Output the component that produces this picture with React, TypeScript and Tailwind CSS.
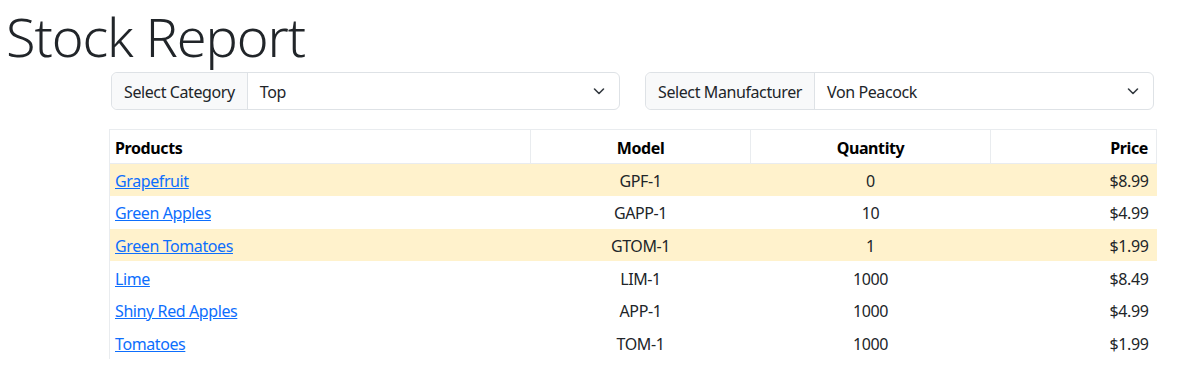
import React from 'react'

const rows = [
    { name: 'Grapefruit', model: 'GPF-1', qty: 0, price: '$8.99' },
    { name: 'Green Apples', model: 'GAPP-1', qty: 10, price: '$4.99' },
    { name: 'Green Tomatoes', model: 'GTOM-1', qty: 1, price: '$1.99' },
    { name: 'Lime', model: 'LIM-1', qty: 1000, price: '$8.49' },
    { name: 'Shiny Red Apples', model: 'APP-1', qty: 1000, price: '$4.99' },
    { name: 'Tomatoes', model: 'TOM-1', qty: 1000, price: '$1.99' },
]

const Chevron = () => (
    <svg width="16" height="16" viewBox="0 0 16 16" fill="none" stroke="#343a40" strokeWidth="1.6" strokeLinecap="round" strokeLinejoin="round">
        <path d="M3.5 6l4.5 4.5 4.5-4.5" />
    </svg>
)

const SelectGroup = ({ label, value }: { label: string; value: string }) => (
    <div className="flex h-[38px] w-[509px] rounded-md border border-[#dee2e6] text-[16px] text-[#212529]">
        <div className="flex items-center px-3 pt-[2px] bg-[#f8f9fa] border-r border-[#dee2e6] rounded-l-md">{label}</div>
        <div className="flex flex-1 items-center justify-between pl-3 pr-[12px]">
            <span className="pt-[2px]">{value}</span>
            <Chevron />
        </div>
    </div>
)

const App = () => {
    return (
        <div className="bg-white w-[1201px] h-[384px] tracking-[-0.4px]" style={{ fontFamily: '"Segoe UI", "Noto Sans", sans-serif' }}>
            <h1 className="pl-[6px] pt-[2px] h-[72px] text-[54px] font-light leading-[68px] text-[#212529] tracking-[-1.1px]">Stock Report</h1>
            <div className="flex gap-[25px] ml-[111px]">
                <SelectGroup label="Select Category" value="Top" />
                <SelectGroup label="Select Manufacturer" value="Von Peacock" />
            </div>
            <table className="ml-[109px] mt-[19px] w-[1047px] table-fixed border-collapse text-[16px] text-[#212529] border-l border-[#e9ecef]">
                <colgroup>
                    <col className="w-[421px]" />
                    <col className="w-[220px]" />
                    <col className="w-[240px]" />
                    <col className="w-[166px]" />
                </colgroup>
                <thead>
                    <tr className="h-[34px] font-bold text-black">
                        <th className="border border-[#e9ecef] border-l-0 px-[5px] pt-[2px] text-left">Products</th>
                        <th className="border border-[#e9ecef] px-[5px] pt-[2px] text-center">Model</th>
                        <th className="border border-[#e9ecef] px-[5px] pt-[2px] text-center">Quantity</th>
                        <th className="border border-[#e9ecef] px-[8px] pt-[2px] text-right">Price</th>
                    </tr>
                </thead>
                <tbody>
                    {rows.map((r) => (
                        <tr key={r.name} className={r.qty < 10 ? 'h-[32.6px] bg-[#fff2cc]' : 'h-[32.6px]'}>
                            <td className="px-[5px] pt-[2px]">
                                <a href="#" className="text-[#0d6efd] underline">{r.name}</a>
                            </td>
                            <td className="text-center pt-[2px]">{r.model}</td>
                            <td className="text-center pt-[2px]">{r.qty}</td>
                            <td className="px-[8px] pt-[2px] text-right">{r.price}</td>
                        </tr>
                    ))}
                </tbody>
            </table>
        </div>
    )
}

export default App
